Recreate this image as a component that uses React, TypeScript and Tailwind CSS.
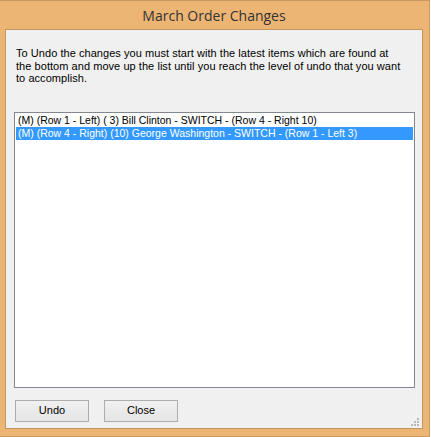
import React from 'react';

const items = [
  '(M) (Row 1 - Left) ( 3) Bill Clinton - SWITCH - (Row 4 - Right 10)',
  '(M) (Row 4 - Right) (10) George Washington - SWITCH - (Row 1 - Left 3)',
];

const App = () => {
  return (
    <div className="w-[431px] h-[437px] bg-white">
      <div
        className="w-[430px] h-[437px] bg-[#ECB574] border-r border-b border-t border-[#C99A60] pl-[5px] pr-[6px] pb-[7px] flex flex-col"
        style={{ fontFamily: '"Liberation Sans", Arial, sans-serif' }}
      >
        <div className="h-[28px] flex items-center justify-center text-[14px] text-[#333333]" style={{ fontFamily: '"Open Sans", "Noto Sans", sans-serif' }}>
          March Order Changes
        </div>
        <div className="flex-1 border border-[#C4965F] bg-[#F0F0F0] relative flex flex-col">
          <div className="pl-[10px] pt-[17px] text-[11px] leading-[12.5px] tracking-[0.05px] text-black">
            <div className="whitespace-nowrap">To Undo the changes you must start with the latest items which are found at</div>
            <div className="whitespace-nowrap">the bottom and move up the list until you reach the level of undo that you want</div>
            <div className="whitespace-nowrap">to accomplish.</div>
          </div>
          <div className="ml-[8px] mt-[27px] w-[401px] h-[276px] border border-[#828790] bg-white p-px">
            {items.map((t, i) => (
              <div
                key={i}
                className={`h-[13px] pl-[2px] text-[10.5px] leading-[13px] whitespace-nowrap ${i === 1 ? 'bg-[#3399FF] text-white' : 'text-black'}`}
              >
                {t}
              </div>
            ))}
          </div>
          <div className="flex gap-[15px] ml-[9px] mt-[12px]">
            <button className="w-[74px] h-[22px] border border-[#ADADAD] bg-gradient-to-b from-[#F0F0F0] to-[#E5E5E5] text-[11px] text-black">
              Undo
            </button>
            <button className="w-[74px] h-[22px] border border-[#ADADAD] bg-gradient-to-b from-[#F0F0F0] to-[#E5E5E5] text-[11px] text-black">
              Close
            </button>
          </div>
          <svg className="absolute right-[3px] bottom-[2px]" width="8" height="8" viewBox="0 0 8 8">
            <rect x="6" y="0" width="2" height="2" fill="#B8B8B8" />
            <rect x="3" y="3" width="2" height="2" fill="#B8B8B8" />
            <rect x="6" y="3" width="2" height="2" fill="#B8B8B8" />
            <rect x="0" y="6" width="2" height="2" fill="#B8B8B8" />
            <rect x="3" y="6" width="2" height="2" fill="#B8B8B8" />
            <rect x="6" y="6" width="2" height="2" fill="#B8B8B8" />
          </svg>
        </div>
      </div>
    </div>
  );
};

export default App;
